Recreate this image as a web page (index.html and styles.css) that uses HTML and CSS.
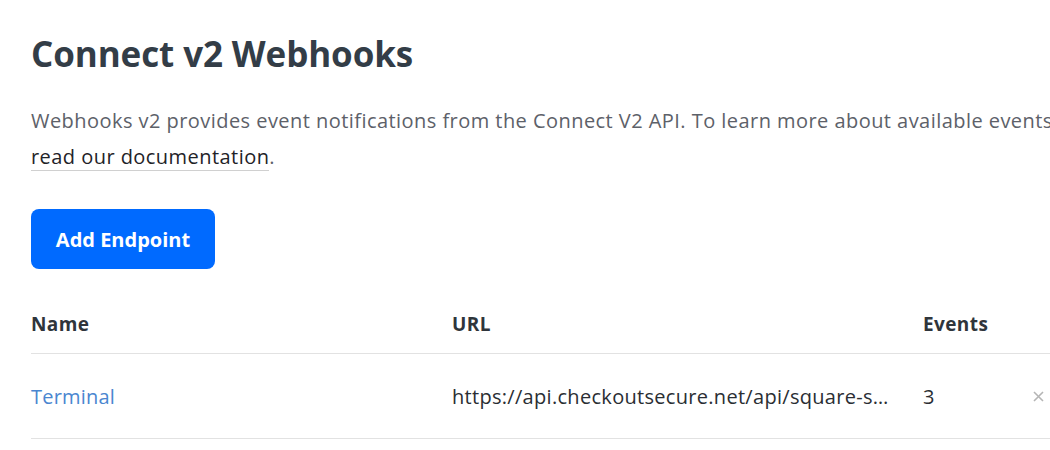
FILE: index.html
```html
<!DOCTYPE html>
<html lang="en">
<head>
    <meta charset="UTF-8">
    <title>Connect v2 Webhooks</title>
    <link rel="stylesheet" href="styles.css">
</head>
<body>
    <div class="page">
        <h1>Connect v2 Webhooks</h1>
        <p class="intro">
            Webhooks v2 provides event notifications from the Connect V2 API. To learn more about available events,
            <a href="#" class="doc-link">read our documentation</a>.
        </p>
        <button class="add-btn">Add Endpoint</button>
        <table class="endpoints">
            <thead>
                <tr>
                    <th class="col-name">Name</th>
                    <th class="col-url">URL</th>
                    <th class="col-events">Events</th>
                    <th class="col-action"></th>
                </tr>
            </thead>
            <tbody>
                <tr>
                    <td class="col-name"><a href="#" class="endpoint-link">Terminal</a></td>
                    <td class="col-url"><div class="url">https://api.checkoutsecure.net/api/square-subscriptions/webhook</div></td>
                    <td class="col-events">3</td>
                    <td class="col-action">
                        <svg class="close" width="11" height="11" viewBox="0 0 11 11">
                            <path d="M1 1 L10 10 M10 1 L1 10" stroke="#b5b5b5" stroke-width="1.6" fill="none"/>
                        </svg>
                    </td>
                </tr>
            </tbody>
        </table>
    </div>
</body>
</html>
```

FILE: styles.css
```css
html, body {
    margin: 0;
    overflow: hidden;
    background: #fff;
}
body {
    font-family: "Open Sans", Arial, sans-serif;
    color: #333d47;
}
.page {
    width: 1120px;
    padding: 30px 0 0 31px;
}
h1 {
    margin: 0;
    font-size: 35px;
    font-weight: 700;
    line-height: 48px;
    color: #333d47;
    letter-spacing: -0.1px;
}
.intro {
    margin: 25px 0 0;
    width: 1075px;
    font-size: 20px;
    letter-spacing: 0.45px;
    line-height: 36px;
    color: #5d6169;
}
.doc-link {
    color: #1f2328;
    text-decoration: none;
    border-bottom: 1px solid #d0d0d0;
}
.add-btn {
    margin-top: 34px;
    width: 184px;
    height: 60px;
    border: none;
    border-radius: 8px;
    background: #006aff;
    color: #fff;
    font-family: inherit;
    font-size: 20px;
    font-weight: 700;
    cursor: pointer;
}
.endpoints {
    margin-top: 25px;
    border-collapse: collapse;
    width: 1060px;
    table-layout: fixed;
}
.endpoints th {
    text-align: left;
    font-size: 19px;
    letter-spacing: 0.4px;
    font-weight: 700;
    color: #2f353b;
    height: 59px;
    padding: 0;
    border-bottom: 1px solid #e2e2e2;
}
.endpoints td {
    font-size: 20px;
    letter-spacing: 0.2px;
    height: 84px;
    padding: 0;
    color: #2a2e33;
    border-bottom: 1px solid #e2e2e2;
}
.col-name { width: 421px; }
.col-url { width: 471px; }
.col-events { width: 110px; }
.url {
    width: 447px;
    white-space: nowrap;
    overflow: hidden;
    text-overflow: ellipsis;
    letter-spacing: 0.3px;
}
.endpoint-link {
    color: #4a86d0;
    text-decoration: none;
}
.col-action { text-align: left; }
.close {
    display: block;
    margin-left: 0;
}
```
